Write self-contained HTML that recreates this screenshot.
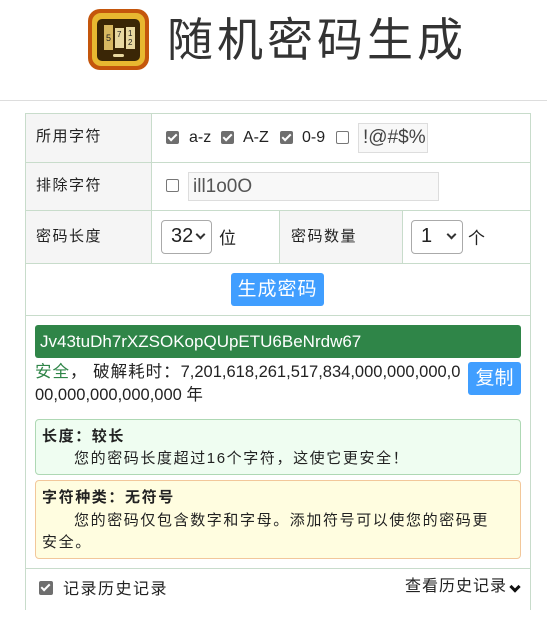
<!DOCTYPE html>
<html><head><meta charset="utf-8"><style>
*{box-sizing:border-box;margin:0;padding:0}
body{width:547px;height:623px;background:#fff;font-family:"Liberation Sans","Noto Sans CJK SC",sans-serif;color:#222;position:relative;overflow:hidden}
.a{position:absolute}
.t{font-size:15px;line-height:20px;letter-spacing:1.5px}
.cb{position:absolute;width:13px;height:13px;border-radius:2px}
.on{background:#6e6e6e}
.on::after{content:"";position:absolute;left:4px;top:1px;width:3px;height:7px;border:solid #fff;border-width:0 2px 2px 0;transform:rotate(45deg)}
.off{border:1px solid #777;background:#fff}
.line{position:absolute;background:#c8dccb}
.sel{position:absolute;border:1px solid #aaa;border-radius:4px;background:#fff;font-size:20px;line-height:30px;padding-left:9px}
.sel::after{content:"";position:absolute;right:7px;top:10px;width:5px;height:5px;border:solid #333;border-width:0 2px 2px 0;transform:rotate(45deg)}
</style></head><body>
<svg class="a" style="left:87px;top:8px" width="63" height="63" viewBox="0 0 63 63">
<rect x="1" y="1" width="61" height="61" rx="12" fill="#c4560c"/>
<rect x="5" y="5" width="53" height="53" rx="9" fill="#e8b830"/>
<rect x="10" y="11" width="43" height="42" rx="5" fill="#3a2606"/>
<rect x="17" y="17" width="9" height="25" fill="#d8b860"/><rect x="28" y="20" width="9" height="20" fill="#e8d8a0"/><rect x="39" y="19" width="9" height="22" fill="#e8d8a0"/>
<text x="19" y="33" font-size="9" font-family="Liberation Sans" fill="#222">5</text><text x="30" y="29" font-size="8" font-family="Liberation Sans" fill="#222">7</text><text x="41" y="28" font-size="8" font-family="Liberation Sans" fill="#222">1</text><text x="41" y="37" font-size="8" font-family="Liberation Sans" fill="#222">2</text>
<rect x="26" y="46" width="11" height="3" rx="1.5" fill="#e8d8a0"/></svg>
<div class="a" style="left:167px;top:10px;font-size:46px;line-height:60px;color:#333;letter-spacing:4px">随机密码生成</div>
<div class="a" style="left:0;top:100px;width:547px;height:1px;background:#ddd"></div>

<div class="a" style="left:26px;top:113px;width:125px;height:150px;background:#f5f5f5"></div>
<div class="a" style="left:279px;top:210px;width:123px;height:53px;background:#f5f5f5"></div>
<div class="line" style="left:25px;top:113px;width:506px;height:1px"></div>
<div class="line" style="left:25px;top:162px;width:506px;height:1px"></div>
<div class="line" style="left:25px;top:210px;width:506px;height:1px"></div>
<div class="line" style="left:25px;top:263px;width:506px;height:1px"></div>
<div class="line" style="left:25px;top:315px;width:506px;height:1px"></div>
<div class="line" style="left:25px;top:568px;width:506px;height:1px"></div>
<div class="line" style="left:25px;top:113px;width:1px;height:497px"></div>
<div class="line" style="left:530px;top:113px;width:1px;height:497px"></div>
<div class="line" style="left:151px;top:113px;width:1px;height:150px"></div>
<div class="line" style="left:279px;top:210px;width:1px;height:53px"></div>
<div class="line" style="left:402px;top:210px;width:1px;height:53px"></div>

<div class="a t" style="left:36px;top:127px">所用字符</div>
<div class="a t" style="left:36px;top:176px">排除字符</div>
<div class="a t" style="left:36px;top:227px">密码长度</div>
<div class="a t" style="left:291px;top:227px">密码数量</div>

<div class="cb on" style="left:166px;top:131px"></div><div class="a" style="left:189px;top:128px;font-size:16px;line-height:20px">a-z</div>
<div class="cb on" style="left:221px;top:131px"></div><div class="a" style="left:243px;top:128px;font-size:16px;line-height:20px">A-Z</div>
<div class="cb on" style="left:280px;top:131px"></div><div class="a" style="left:302px;top:128px;font-size:16px;line-height:20px">0-9</div>
<div class="cb off" style="left:336px;top:131px"></div>
<div class="a" style="left:358px;top:123px;width:70px;height:30px;border:1px solid #ddd;background:#f8f8f8;font-size:19px;line-height:28px;padding-left:4px;overflow:hidden;white-space:nowrap;color:#444">!@#$%</div>
<div class="cb off" style="left:166px;top:179px"></div>
<div class="a" style="left:188px;top:172px;width:251px;height:29px;border:1px solid #ddd;background:#f8f8f8;font-size:19px;line-height:27px;padding-left:4px;color:#555">ill1o0O</div>
<div class="sel" style="left:161px;top:220px;width:51px;height:34px">32</div>
<div class="a" style="left:219px;top:228px;font-size:17px;line-height:22px">位</div>
<div class="sel" style="left:411px;top:220px;width:52px;height:34px">1</div>
<div class="a" style="left:468px;top:228px;font-size:17px;line-height:22px">个</div>

<div class="a" style="left:231px;top:273px;width:93px;height:33px;background:#409eff;border-radius:3px;color:#fff;font-size:19px;line-height:33px;text-align:center;letter-spacing:1px">生成密码</div>

<div class="a" style="left:35px;top:325px;width:486px;height:33px;background:#2f8548;border-radius:3px;color:#fff;font-size:17px;line-height:33px;padding-left:5px">Jv43tuDh7rXZSOKopQUpETU6BeNrdw67</div>
<div class="a" style="left:35px;top:361px;width:428px;font-size:16.5px;line-height:23px;color:#222;word-break:break-all"><span style="color:#2f8548;letter-spacing:1px">安全</span><span style="letter-spacing:1px">，&nbsp;破解耗时：</span>7,201,618,261,517,834,000,000,000,000,000,000,000,000 年</div>
<div class="a" style="left:468px;top:362px;width:53px;height:33px;background:#409eff;border-radius:3px;color:#fff;font-size:19px;line-height:33px;text-align:center">复制</div>

<div class="a" style="left:35px;top:419px;width:486px;height:56px;background:#effdf1;border:1px solid #aed8b4;border-radius:4px;padding:6px 6px;font-size:15px;line-height:22px;letter-spacing:1.6px">
<b>长度：较长</b><br><span style="padding-left:32px">您的密码长度超过16个字符，这使它更安全！</span></div>
<div class="a" style="left:35px;top:480px;width:486px;height:79px;background:#fffde0;border:1px solid #f2c79a;border-radius:4px;padding:6px 6px;font-size:15px;line-height:22.5px;letter-spacing:1.6px;white-space:nowrap">
<b>字符种类：无符号</b><br><span style="padding-left:32px">您的密码仅包含数字和字母。添加符号可以使您的密码更</span><br>安全。</div>

<div class="cb on" style="left:39px;top:581px;width:14px;height:14px"></div>
<div class="a" style="left:63px;top:580px;font-size:16px;line-height:20px;letter-spacing:1.5px">记录历史记录</div>
<div class="a" style="left:405px;top:577px;font-size:16px;line-height:20px;letter-spacing:1px">查看历史记录</div>
<div class="a" style="left:511px;top:583px;width:8px;height:8px;border:solid #111;border-width:0 3px 3px 0;transform:rotate(45deg)"></div>
</body></html>
